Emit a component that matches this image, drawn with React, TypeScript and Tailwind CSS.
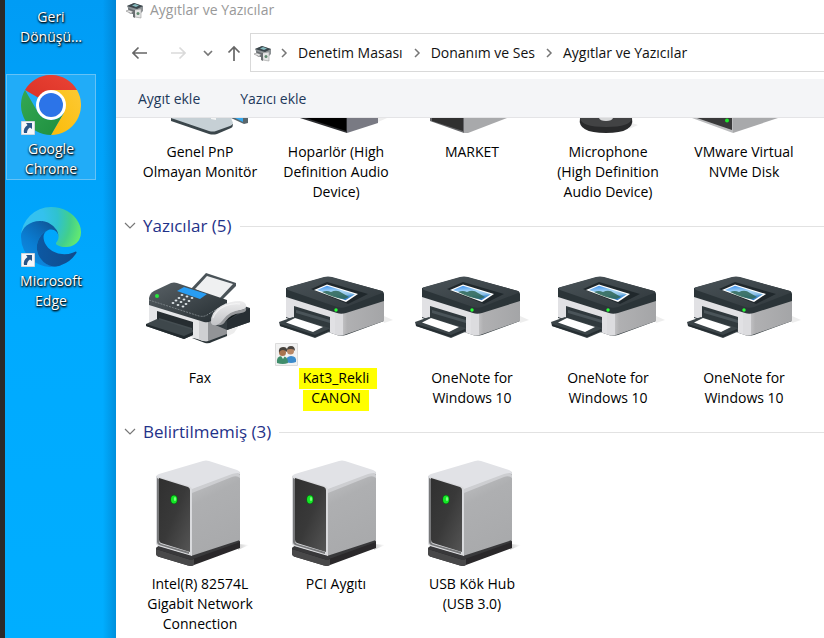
import type { ReactNode } from "react";

const ROW = "grid grid-cols-[repeat(auto-fill,136px)] pl-4";

function PrinterGlyph() {
  return (
    <svg viewBox="0 0 136 120" className="h-[120px] w-[136px]" aria-hidden="true">
      <defs>
        <linearGradient id="prTop" x1="0" y1="0" x2="1" y2="1">
          <stop offset="0" stopColor="#4a5358" />
          <stop offset="1" stopColor="#30383c" />
        </linearGradient>
        <linearGradient id="prSide" x1="0" y1="0" x2="1" y2="0">
          <stop offset="0" stopColor="#d2d2d5" />
          <stop offset="0.2" stopColor="#b0b0b2" />
          <stop offset="1" stopColor="#a4a5a7" />
        </linearGradient>
        <linearGradient id="prPhoto" x1="0.4" y1="0" x2="0.6" y2="1">
          <stop offset="0" stopColor="#4c9bf0" />
          <stop offset="0.4" stopColor="#a9d7f7" />
          <stop offset="0.65" stopColor="#8fc0e4" />
          <stop offset="0.75" stopColor="#4f98d8" />
          <stop offset="1" stopColor="#2e78c4" />
        </linearGradient>
      </defs>
      <path d="M116 74l9 4-9 3z" fill="#ededed" />
      <path d="M18 72v4l48 16q6 3 12 1l38-14v-3z" fill="#30393d" />
      <path d="M18 51L71 68v25q-4 0-8-2L18 75z" fill="#e1e1e4" />
      <path d="M70 68L116 54v25L76 93q-3 1-6 0z" fill="url(#prSide)" />
      <path d="M67 68h8v25q-5 1-8-1z" fill="#dcdcdf" />
      <path d="M26 64l36 11v15L26 78z" fill="#30393d" />
      <path d="M28 68l34 10v3L28 71z" fill="#4a5459" />
      <path d="M11 80l14-5 37 11-1 4-14 6-35-12z" fill="#3b4448" />
      <path d="M18 80.500l9-4.500 28 9-10 5z" fill="#fff" />
      <path d="M12 82l35 11 14-6v2l-14 6-35-11z" fill="#262e32" />
      <path d="M18 46L56 35.500q4-1.200 8 0L114 49q2 1 2 3v7L78 71q-5 1.500-9 0L18 55z" fill="#2b3438" />
      <path d="M19 45.500L56 35q4-1 8 0l50 14q2 1 0 2L78 65q-5 1.500-9 0L20 48q-2-1-1-2.500z" fill="url(#prTop)" />
      <path d="M43 47l16-7 41 12-20 10z" fill="#20282c" />
      <path d="M46 48l13-5.500 31 9.500-12 8z" fill="#fff" />
      <path d="M49 48l10-4.300 28 8.500-9.500 6z" fill="url(#prPhoto)" />
      <path d="M54 50q5-2 9 0 6-3 11 1l7 4-5 2q-8 0-22-7z" fill="#2f6656" opacity=".85" />
      <circle cx="68" cy="68" r="1.700" fill="#2aff38" />
    </svg>
  );
}

function FaxGlyph() {
  const keys = [
    [50, 53], [55, 54.500], [60, 56],
    [47, 56], [52, 57.500], [57, 59],
    [44, 58.500], [49, 60], [54, 62],
    [41, 61], [46, 63], [51, 64.500],
  ];
  return (
    <svg viewBox="0 0 136 120" className="h-[120px] w-[136px]" aria-hidden="true">
      <defs>
        <linearGradient id="fxTop" x1="0" y1="0" x2="1" y2="1">
          <stop offset="0" stopColor="#596166" />
          <stop offset="1" stopColor="#252d31" />
        </linearGradient>
        <linearGradient id="fxHand" x1="0" y1="0" x2="0" y2="1">
          <stop offset="0" stopColor="#ededee" />
          <stop offset="1" stopColor="#c2c3c6" />
        </linearGradient>
      </defs>
      <path d="M88 90l18-5-4 6-10 5z" fill="#ededed" />
      <path d="M58 48l16-17 30 10v3L88 60z" fill="#4a5358" />
      <path d="M63 47l12-13 26 8-15 16z" fill="#eff0f1" />
      <path d="M60 96l13 5q4 1 7-1l15-6v-3L76 97z" fill="#2b3438" />
      <path d="M17 62l56 18v19q-3 0-5-1L17 81z" fill="#e5e6e8" />
      <path d="M72 80l23-14v26L79 98q-4 2-7 1z" fill="#929497" />
      <path d="M67 79h9v20q-5 1-9-2z" fill="#cfd0d2" />
      <path d="M25 69l36 11v13L25 81z" fill="#262d31" />
      <path d="M27 76l33 10v3L27 79z" fill="#454e52" />
      <path d="M14 82l11-5 36 11v5l-9 4-38-13z" fill="#3e474b" />
      <path d="M14 82l38 12 9-4v3l-9 4-38-13z" fill="#222a2e" />
      <path d="M17 56q1-5 5-7l17-8q3-1 6 0l50 17v9L79 79q-3 2-7 1L17 63z" fill="url(#fxTop)" />
      <path d="M17 58l50 16q5 1 8-1l20-12" fill="none" stroke="#788084" strokeWidth="1" strokeDasharray="2 1" />
      <path d="M45 49l7-4 23 7-7 5z" fill="#299df3" />
      {keys.map(([x, y]) => (
        <ellipse key={x + "-" + y} cx={x} cy={y} rx="1.400" ry="1" fill="#dce2e6" />
      ))}
      <circle cx="25" cy="54" r="2" fill="#28e83c" />
      <path d="M82 74l27-11 9 3v14L95 88l-14-6z" fill="#353d42" />
      <path d="M95 79l23-13v14L95 88z" fill="#272e33" />
      <path d="M91 76l14-9 3 3-15 10z" fill="#11181b" />
      <path d="M79 81q-1-11 10-17 9-5 19-5 7 1 6 6 0 2-5 3-11 2-17 10-4 5-7 5-5 1-6-2z" fill="url(#fxHand)" />
      <path d="M81 76q3-8 12-12 8-3 15-2" fill="none" stroke="#fff" strokeWidth="1.200" opacity=".6" />
      <path d="M85 83q3-1 6-5 6-9 18-10 5-1 5-3v3q0 2-5 3-11 1-16 9-3 4-8 3z" fill="#96989b" />
    </svg>
  );
}

function DeviceBoxGlyph() {
  return (
    <svg viewBox="1 0 136 120" className="h-[120px] w-[136px]" aria-hidden="true">
      <defs>
        <linearGradient id="bxSide" x1="0.300" y1="0" x2="0.600" y2="1">
          <stop offset="0" stopColor="#bfc0c2" />
          <stop offset="0.300" stopColor="#aeafb1" />
          <stop offset="1" stopColor="#a8a9ab" />
        </linearGradient>
        <linearGradient id="bxFront" x1="0" y1="0" x2="1" y2="1">
          <stop offset="0" stopColor="#303030" />
          <stop offset="0.500" stopColor="#393939" />
          <stop offset="1" stopColor="#555" />
        </linearGradient>
        <linearGradient id="bxShadow" x1="0" y1="0" x2="1" y2="0">
          <stop offset="0" stopColor="#ccc" />
          <stop offset="1" stopColor="#fff" />
        </linearGradient>
      </defs>
      <path d="M107 96l11 1-11 5z" fill="url(#bxShadow)" />
      <path d="M25 101q0-2 3-3l32 9 46-16q3 1 3 3v6L63 117q-3 1.500-6 .5l-30-9q-2-1-2-3z" fill="#2a282a" />
      <path d="M25 101l32 10q3 1 6 0v6q-3 1.500-6 .5l-30-9q-2-1-2-3z" fill="#484849" />
      <path d="M25 101q0-2 3-3l32 10 46-16q3 0 3 2L62 111q-2 1-5 0z" fill="#38383a" />
      <path d="M60 40l46-17q3 0 3 3v66l-49 16z" fill="url(#bxSide)" />
      <path d="M25 29q0-2 3-3l44-13q3-1 6 0l28 9q3 1 3 4-2-1-5 0L60 42z" fill="#e1e2e6" />
      <path d="M61 41l40-15q6-2 8 1v3q-3-3-8-1L61 45z" fill="#cdced1" />
      <path d="M25 28l33 10q3 1 3 4v66l-34-10q-2-1-2-3z" fill="#d9dadd" />
      <path d="M26 30l2 1v62q0 2 2 3l28 8v2l-30-9q-2-1-2-3z" fill="#77787a" />
      <path d="M28 30l29 9q2 1 2 3v62l-29-9q-2-1-2-3z" fill="url(#bxFront)" />
      <ellipse cx="43" cy="51.500" rx="3.800" ry="4.800" fill="#0c6413" />
      <ellipse cx="43" cy="51.500" rx="3" ry="4" fill="#14e826" />
      <ellipse cx="44" cy="51" rx="1.200" ry="2" fill="#79ff7c" />
    </svg>
  );
}

function Clipped({ children }: { children: ReactNode }) {
  return (
    <svg viewBox="0 0 136 24" className="h-6 w-[136px]" aria-hidden="true">
      {children}
    </svg>
  );
}

function MonitorFoot() {
  return (
    <Clipped>
      <path d="M39 0v3l38 13q4 1 8 0l14-6q2-1 2-4z" fill="#3b464b" />
      <path d="M39 0h60l2 5q0 2-3 3l-14 5q-3 1-7 0z" fill="#c6d0d5" />
      <path d="M79 0h5v2l-5-1z" fill="#f4f5f5" />
      <path d="M99 0h17v5l-4 1z" fill="#59666c" />
      <path d="M103 0h8v4z" fill="#36a9ee" />
    </Clipped>
  );
}

function SpeakerFoot() {
  return (
    <Clipped>
      <path d="M110 0h9l-9 4z" fill="#eee" />
      <path d="M32 0l47 15V0z" fill="#2b2c2f" />
      <path d="M38 0l40 13V0z" fill="#000" />
      <path d="M79 0h31v5L79 15z" fill="#797a83" />
    </Clipped>
  );
}

function ComputerFoot() {
  return (
    <Clipped>
      <path d="M26 0v3l34 12V0z" fill="#66676a" />
      <path d="M28 0v3l31 10V0z" fill="#303030" />
      <path d="M60 0h43L64 15h-4z" fill="#a8a9ab" />
    </Clipped>
  );
}

function MicrophoneFoot() {
  return (
    <Clipped>
      <path d="M92 5l6 2-9 4z" fill="#eee" />
      <path d="M40 0q-3 15 26 15T92 0z" fill="#292a2b" />
      <path d="M40 0h52q-1 9-26 9T40 0z" fill="#424344" />
      <path d="M59 0h14q-1 3-7 3t-7-3z" fill="#d7d8d9" />
    </Clipped>
  );
}

function DiskFoot() {
  return (
    <Clipped>
      <path d="M16 0l41 15V0z" fill="#bbbcbe" />
      <path d="M21 0l35 12V0z" fill="#39393a" />
      <path d="M57 0h45L57 15z" fill="#a8a9ab" />
      <circle cx="51" cy="2.500" r="2" fill="#1fe82c" />
    </Clipped>
  );
}

function SharedBadge() {
  return (
    <svg viewBox="0 0 24 24" className="absolute bottom-[-5px] left-[7px] size-6" aria-hidden="true">
      <path d="M.5.500h22v22H.5z" fill="#f2f2f2" stroke="#dcdcdc" />
      <path d="M11 19q0-6 5-6 6 0 5 6-5 2-10 0z" fill="#3c8bcb" />
      <circle cx="15.500" cy="8" r="3.500" fill="#b98865" />
      <path d="M12 7q0-4 4-4t4 5q-1-2-4-2-3 0-4 1z" fill="#4a4540" />
      <path d="M2 20q-1-7 5-7t6 7q-5 2-11 0z" fill="#3f8d6b" />
      <path d="M6 13l2 3 2-3z" fill="#e8f2ec" />
      <circle cx="7.500" cy="9.500" r="3.500" fill="#a9744f" />
      <path d="M4 10q-1-6 4-6t4 5q-2-2-4-2-3 0-4 3z" fill="#45403a" />
    </svg>
  );
}

function SmallPrinter() {
  return (
    <svg viewBox="0 0 18 18" className="size-[18px] shrink-0" aria-hidden="true">
      <path d="M1 5l7-3 9 3v5l-3 3-11-4z" fill="#8d9295" />
      <path d="M1 5l7-3 9 3-6 3z" fill="#3b464b" />
      <path d="M6 4.500l3-1.500 4 1.500L10 6z" fill="#84b9bd" />
      <path d="M2 7l8 3v4l-3-1-4-1z" fill="#656c70" />
      <path d="M0 10l3-1 4 1.500-2 2z" fill="#e9e9e9" stroke="#777" strokeWidth=".5" />
      <path d="M8 9l7-1v9l-6-1z" fill="#e4e5e5" stroke="#9b9b9b" strokeWidth=".6" />
      <path d="M7 9v7l2 1V9z" fill="#6b6f72" />
      <circle cx="12" cy="12.500" r="1.500" fill="#618a70" />
    </svg>
  );
}

function Chevron() {
  return (
    <svg viewBox="0 0 8 10" className="h-[10px] w-2 shrink-0" aria-hidden="true">
      <path d="M2 1l4 4-4 4" fill="none" stroke="#767676" strokeWidth="1.500" />
    </svg>
  );
}

function ShortcutArrow() {
  return (
    <svg viewBox="0 0 14 14" className="absolute bottom-0 left-0 size-[14px]" aria-hidden="true">
      <path d="M.5.500h13v13H.5z" fill="#f5f7fa" stroke="#cdd5dc" />
      <path d="M5 2h6v6L9 6.500Q6 8 6 12H3Q2 7 6.500 4z" fill="#285486" />
    </svg>
  );
}

function ChromeLogo() {
  return (
    <svg viewBox="0 0 60 60" className="size-[60px]" aria-hidden="true">
      <defs>
        <linearGradient id="chR" x1="0" y1="1" x2="1" y2="0">
          <stop offset="0" stopColor="#d93025" />
          <stop offset="1" stopColor="#ea4335" />
        </linearGradient>
        <linearGradient id="chY" x1="1" y1="0" x2="0" y2="1">
          <stop offset="0" stopColor="#fcc934" />
          <stop offset="1" stopColor="#fbbc08" />
        </linearGradient>
        <linearGradient id="chG" x1="1" y1="1" x2="0" y2="0">
          <stop offset="0" stopColor="#1e8e3e" />
          <stop offset="1" stopColor="#34a853" />
        </linearGradient>
      </defs>
      <path d="M30 30L4 15a30 30 0 0 1 52 0z" fill="url(#chR)" />
      <path d="M30 15h26a30 30 0 0 1-26 45l13-22.500z" fill="url(#chY)" />
      <path d="M4 15l13 22.500a15 15 0 0 0 26 0L30 60A30 30 0 0 1 4 15z" fill="url(#chG)" />
      <circle cx="30" cy="30" r="15" fill="#fff" />
      <circle cx="30" cy="30" r="12" fill="#2c74e8" />
    </svg>
  );
}

function EdgeLogo() {
  return (
    <svg viewBox="0 0 256 256" className="size-[60px]" aria-hidden="true">
      <defs>
        <linearGradient id="edA" x1="60" y1="178" x2="240" y2="178" gradientUnits="userSpaceOnUse">
          <stop offset="0" stopColor="#0c59a4" />
          <stop offset="1" stopColor="#114a8b" />
        </linearGradient>
        <linearGradient id="edB" x1="150" y1="100" x2="45" y2="220" gradientUnits="userSpaceOnUse">
          <stop offset="0" stopColor="#0f5a9c" />
          <stop offset="0.250" stopColor="#0c68b4" />
          <stop offset="0.670" stopColor="#0a7dd2" />
          <stop offset="1" stopColor="#0e86dc" />
        </linearGradient>
        <radialGradient id="edC" cx="25" cy="50" r="240" gradientUnits="userSpaceOnUse">
          <stop offset="0" stopColor="#35c1f1" />
          <stop offset="0.300" stopColor="#34c1ed" />
          <stop offset="0.550" stopColor="#2fc2cf" />
          <stop offset="0.780" stopColor="#42cf8c" />
          <stop offset="1" stopColor="#66eb6e" />
        </radialGradient>
      </defs>
      <path
        d="M105.700 241.400a79.200 79.200 0 0 1-22.700-21.300 80.700 80.700 0 0 1 29.500-120c3.200-1.500 8.500-4.100 15.600-4a32.400 32.400 0 0 1 25.700 13 31.900 31.900 0 0 1 6.300 18.700c0-.2 24.500-79.600-80-79.600-43.900 0-80 41.600-80 78.200a130.200 130.200 0 0 0 12.100 56 128 128 0 0 0 156.400 67 75.500 75.500 0 0 1-62.900-8z"
        fill="url(#edB)"
      />
      <path
        d="M231 190.500c-3.400 1.800-6.900 3.400-10.500 4.700a101.900 101.900 0 0 1-35.900 6.500c-47.300 0-88.500-32.600-88.500-74.300a31.500 31.500 0 0 1 16.400-27.300a80.700 80.700 0 0 0-29.500 120a79.200 79.200 0 0 0 58.500 33.800c7.900 0 19.800-2.300 27-4.600l1.300-.4a128.300 128.300 0 0 0 66.600-52.800 4 4 0 0 0-5.400-5.600z"
        fill="url(#edA)"
      />
      <path
        d="M152.300 148.900c-.9 1-3.300 2.500-3.300 5.600 0 2.600 1.700 5.100 4.700 7.200 14.400 10 41.500 8.700 41.500 8.700 10.700 0 21.100-2.900 30.300-8.300A61.400 61.400 0 0 0 256 109.200c.3-22.400-8-37.300-11.300-43.900C223.500 23.900 177.700 0 128 0A128 128 0 0 0 0 126.200c.5-36.500 36.800-66 80-66 3.500 0 23.500.300 42 10.100a72.600 72.600 0 0 1 30.900 29.300c6.100 10.600 7.200 24.100 7.200 29.500s-2.700 13.300-7.800 19.800z"
        fill="url(#edC)"
      />
    </svg>
  );
}

function DesktopIcon({ lines, selected, children }: { lines: string[]; selected?: boolean; children?: ReactNode }) {
  return (
    <button
      type="button"
      className={
        "flex w-[90px] flex-col items-center border text-sm leading-5 text-white " +
        (selected ? "border-[#65c2f6] bg-[#21acf8]" : "border-transparent")
      }
    >
      {children && (
        <span className="relative mb-1 block">
          {children}
          <ShortcutArrow />
        </span>
      )}
      {lines.map((line) => (
        <span key={line} className="block [text-shadow:1px_1px_2px_#000,0_1px_2px_#000]">
          {line}
        </span>
      ))}
    </button>
  );
}

type TileProps = { lines: string[]; glyph: ReactNode; marked?: boolean; clipped?: boolean };

function Tile({ lines, glyph, marked, clipped }: TileProps) {
  return (
    <button type="button" className="flex flex-col items-center justify-start text-sm leading-5 text-black">
      <span className={"relative block " + (clipped ? "" : "mb-[6px]")}>
        {glyph}
        {marked && <SharedBadge />}
      </span>
      {lines.map((line, i) =>
        marked ? (
          <span key={i} className="flex h-5 justify-center">
            <mark
              className={
                "h-[21px] bg-[#ffff00] text-black " +
                (i ? "mt-[2px] px-2 leading-4" : "-mr-1 pr-2 pl-1 leading-5")
              }
            >
              {line}
            </mark>
          </span>
        ) : (
          <span key={i} className="block whitespace-nowrap">
            {line}
          </span>
        ),
      )}
    </button>
  );
}

function Section({ title, count, children }: { title: string; count: number; children: ReactNode }) {
  return (
    <section className="pb-2">
      <h2 className="flex h-8 items-center text-[17px] text-[#1f3289]">
        <button type="button" className="flex items-center gap-[7px] pl-2">
          <svg viewBox="0 0 12 12" className="size-3" aria-hidden="true">
            <path d="M1 3l5 5 5-5" fill="none" stroke="#777" strokeWidth="1.200" />
          </svg>
          <span>
            {title} ({count})
          </span>
        </button>
        <span className="ml-2 h-px flex-1 bg-[#e2e2e2]" />
      </h2>
      <div className={ROW}>{children}</div>
    </section>
  );
}

const devices: TileProps[] = [
  { lines: ["Genel PnP", "Olmayan Monitör"], glyph: <MonitorFoot /> },
  { lines: ["Hoparlör (High", "Definition Audio", "Device)"], glyph: <SpeakerFoot /> },
  { lines: ["MARKET"], glyph: <ComputerFoot /> },
  { lines: ["Microphone", "(High Definition", "Audio Device)"], glyph: <MicrophoneFoot /> },
  { lines: ["VMware Virtual", "NVMe Disk"], glyph: <DiskFoot /> },
];

const printers: TileProps[] = [
  { lines: ["Fax"], glyph: <FaxGlyph /> },
  { lines: ["Kat3_Rekli", "CANON"], glyph: <PrinterGlyph />, marked: true },
  { lines: ["OneNote for", "Windows 10"], glyph: <PrinterGlyph /> },
  { lines: ["OneNote for", "Windows 10"], glyph: <PrinterGlyph /> },
  { lines: ["OneNote for", "Windows 10"], glyph: <PrinterGlyph /> },
];

const unspecified: TileProps[] = [
  { lines: ["Intel(R) 82574L", "Gigabit Network", "Connection"], glyph: <DeviceBoxGlyph /> },
  { lines: ["PCI Aygıtı"], glyph: <DeviceBoxGlyph /> },
  { lines: ["USB Kök Hub", "(USB 3.0)"], glyph: <DeviceBoxGlyph /> },
];

export default function App() {
  return (
    <div className="flex min-h-screen overflow-hidden bg-white font-['Open_Sans','Noto_Sans',sans-serif]">
      <aside className="flex w-[116px] shrink-0 flex-col border-l-[5px] border-[#2b2a29] bg-[linear-gradient(90deg,transparent_88%,#0064a866),linear-gradient(#009cf5,#00aaff_50%,#00aeff)] pl-px">
        <div className="pt-[6px]">
          <DesktopIcon lines={["Geri", "Dönüşü..."]} />
        </div>
        <div className="pt-[26px]">
          <DesktopIcon lines={["Google", "Chrome"]} selected>
            <ChromeLogo />
          </DesktopIcon>
        </div>
        <div className="pt-[26px]">
          <DesktopIcon lines={["Microsoft", "Edge"]}>
            <EdgeLogo />
          </DesktopIcon>
        </div>
      </aside>

      <main className="min-w-0 flex-1">
        <header className="flex h-5 items-center gap-[6px] pl-[10px] text-sm text-[#999]">
          <SmallPrinter />
          <h1 className="leading-5">Aygıtlar ve Yazıcılar</h1>
        </header>

        <nav className="flex items-center pt-[13px] pb-[7px] pl-4" aria-label="Gezinti">
          <button type="button" aria-label="Geri">
            <svg viewBox="0 0 16 16" className="size-4" fill="none" stroke="#666" strokeWidth="1.600">
              <path d="M15 8H1M6.500 2.500L1 8l5.500 5.500" />
            </svg>
          </button>
          <button type="button" aria-label="İleri" className="ml-[22px]" disabled>
            <svg viewBox="0 0 16 16" className="size-4" fill="none" stroke="#dadada" strokeWidth="1.600">
              <path d="M1 8h14M9.500 2.500L15 8l-5.500 5.500" />
            </svg>
          </button>
          <button type="button" aria-label="Son konumlar" className="ml-[17px]">
            <svg viewBox="0 0 10 10" className="size-[10px]" fill="none" stroke="#777" strokeWidth="1.700">
              <path d="M1 3l4 4 4-4" />
            </svg>
          </button>
          <button type="button" aria-label="Yukarı" className="ml-[13px]">
            <svg viewBox="0 0 16 16" className="size-4" fill="none" stroke="#666" strokeWidth="1.700">
              <path d="M8 16V2M2.500 7.500L8 2l5.500 5.500" />
            </svg>
          </button>
          <div className="ml-2 flex h-[39px] min-w-0 flex-1 items-center border border-r-0 border-[#d9d9d9] pl-[3px] text-sm whitespace-nowrap text-[#111]">
            <SmallPrinter />
            <span className="ml-2"><Chevron /></span>
            <a href="#denetim" className="ml-[10px]">Denetim Masası</a>
            <span className="ml-[10px]"><Chevron /></span>
            <a href="#donanim" className="ml-[10px]">Donanım ve Ses</a>
            <span className="ml-[10px]"><Chevron /></span>
            <a href="#aygitlar" className="ml-[10px]">Aygıtlar ve Yazıcılar</a>
          </div>
        </nav>

        <div className="flex h-[39px] items-center gap-10 border-b border-[#e4e4e6] bg-[#f4f5f7] pt-px pl-[22px] text-sm text-[#1e395b]">
          <button type="button">Aygıt ekle</button>
          <button type="button">Yazıcı ekle</button>
        </div>

        <section className="pb-2">
          <div className={ROW}>
            {devices.map((d) => (
              <Tile key={d.lines[0]} {...d} clipped />
            ))}
          </div>
        </section>
        <Section title="Yazıcılar" count={5}>
          {printers.map((d, i) => (
            <Tile key={i} {...d} />
          ))}
        </Section>
        <Section title="Belirtilmemiş" count={3}>
          {unspecified.map((d) => (
            <Tile key={d.lines[0]} {...d} />
          ))}
        </Section>
      </main>
    </div>
  );
}
